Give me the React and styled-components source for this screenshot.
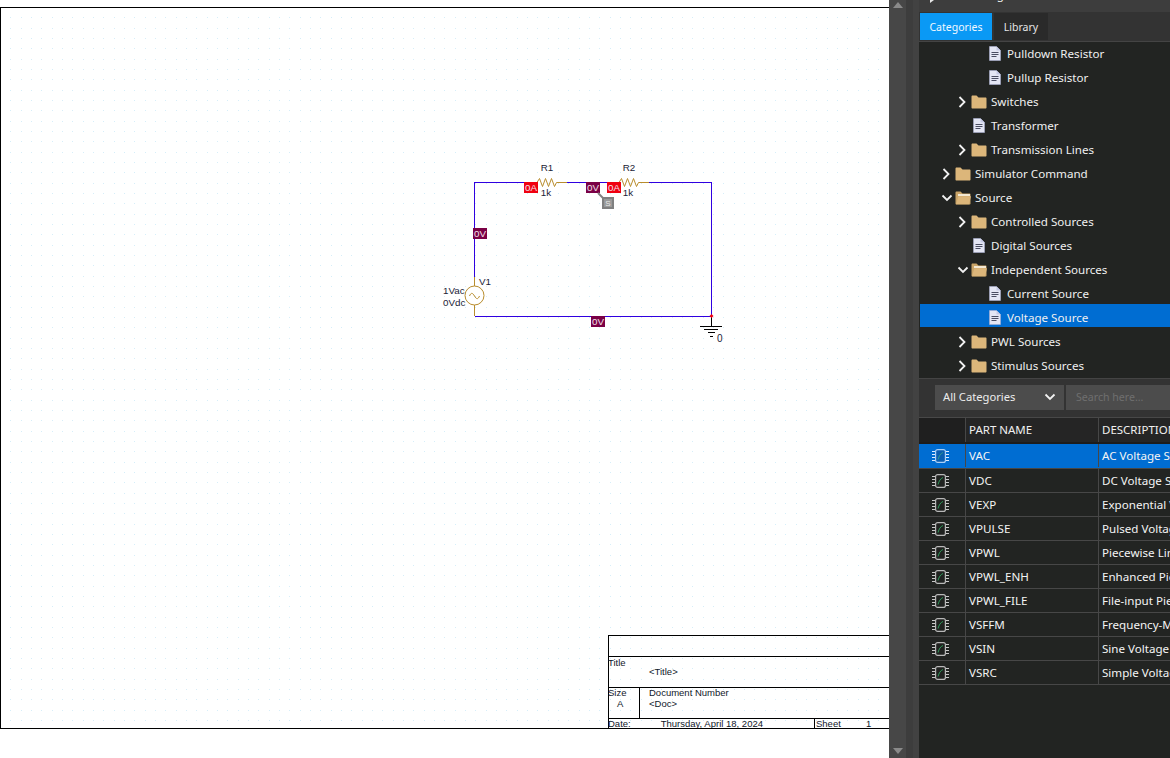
import React from "react";
import styled, { createGlobalStyle } from "styled-components";

const Global = createGlobalStyle`
  html, body { margin: 0; padding: 0; background: #fff; overflow: hidden; }
  * { box-sizing: border-box; }
`;

const UI_FONT = `"Noto Sans", "Open Sans", sans-serif`;
const SCH_FONT = `"Liberation Sans", Arial, sans-serif`;

const Root = styled.div`
  display: flex;
  width: 1170px;
  height: 758px;
  overflow: hidden;
`;

/* ---------- schematic canvas ---------- */
const Canvas = styled.main`
  width: 889px;
  flex: none;
  padding-top: 7px;
  background: #fff;
`;
const Sheet = styled.section`
  position: relative;
  height: 722px;
  border: 1px solid #000;
  border-right: none;
`;
const Drawing = styled.svg`
  position: absolute;
  top: 0;
  left: 0;
  display: block;
  font-family: ${SCH_FONT};
`;
const TitleBlock = styled.div`
  position: absolute;
  left: 607px;
  right: 0;
  bottom: 0;
  height: 93px;
  border-top: 1px solid #000;
  box-shadow: inset 1px 0 0 #000;
  display: grid;
  grid-template-rows: 21px 31px 31px 1fr;
  font: 9.5px/10px ${SCH_FONT};
  color: #10182a;
`;
const TitleRow = styled.div`
  display: flex;
  border-bottom: ${(p) => (p.$last ? "none" : "1px solid #000")};
  overflow: hidden;
`;
const TitleCell = styled.div`
  width: ${(p) => p.$w || "auto"};
  flex: ${(p) => (p.$w ? "none" : "1")};
  border-right: ${(p) => (p.$rule ? "1px solid #000" : "none")};
  padding-left: ${(p) => p.$pad || 0}px;
  padding-top: ${(p) => p.$top || 0}px;
  white-space: nowrap;
`;
const TitleLine = styled.div`
  padding-left: ${(p) => p.$pad || 0}px;
  height: ${(p) => p.$h || 10}px;
`;
const DateValue = styled.span`
  margin-left: 30px;
`;

/* ---------- scrollbar / gutter ---------- */
const ScrollTrack = styled.div`
  width: 17px;
  flex: none;
  background: #474747;
  display: flex;
  flex-direction: column;
  justify-content: space-between;
  align-items: center;
  padding: 2px 0 4px;
`;
const ScrollArrow = styled.span`
  width: 0;
  height: 0;
  border-left: 5px solid transparent;
  border-right: 5px solid transparent;
  border-${(p) => (p.$up ? "bottom" : "top")}: 6px solid #8a8a8a;
`;
const Gutter = styled.div`
  width: 13px;
  flex: none;
  background: linear-gradient(90deg, #3d3d3d 0 7px, #424242 7px);
`;

/* ---------- right panel ---------- */
const Panel = styled.aside`
  flex: 1;
  min-width: 0;
  display: flex;
  flex-direction: column;
  background: #222422;
  font-family: ${UI_FONT};
  color: #ececec;
  overflow: hidden;
`;
const HideBar = styled.div`
  height: 12px;
  flex: none;
  background: #3d3d3d;
  display: flex;
  align-items: flex-end;
  gap: 9px;
  padding-left: 10px;
  overflow: hidden;
  font-size: 11.6px;
  line-height: 16px;
  white-space: nowrap;
`;
const HideText = styled.span`
  display: block;
  margin-bottom: 9px;
  height: 16px;
  flex: none;
`;
const HideArrow = styled.span`
  display: block;
  margin-bottom: 9px;
  flex: none;
  line-height: 0;
`;
const TabBar = styled.div`
  height: 30px;
  flex: none;
  display: flex;
  gap: 2px;
  padding: 1px 0 1px 1px;
  background: #333;
  border-bottom: 1px solid #444;
`;
const Tab = styled.div`
  width: ${(p) => p.$w}px;
  display: flex;
  align-items: center;
  justify-content: center;
  font-size: 10.5px;
  color: ${(p) => (p.$active ? "#f0f8ff" : "#e6e6e6")};
  background: ${(p) => (p.$active ? "#0a99f5" : "#2a2a2a")};
`;
const Tree = styled.div`
  height: 336px;
  flex: none;
  padding-left: 1px;
  overflow: hidden;
`;
const TreeRow = styled.div`
  height: ${(p) => (p.$selected ? 23 : 24)}px;
  margin: ${(p) => (p.$selected ? "-2px 0 3px" : "0")};
  display: flex;
  align-items: center;
  padding-left: ${(p) => 21 + p.$depth * 16}px;
  padding-top: ${(p) => (p.$selected ? 4 : 0)}px;
  padding-bottom: ${(p) => (p.$selected ? 0 : 1)}px;
  background: ${(p) => (p.$selected ? "#006dd2" : "transparent")};
  font-size: 11.6px;
  color: #f0f0f0;
  white-space: nowrap;
`;
const Chevron = styled.span`
  width: 14px;
  height: 14px;
  flex: none;
  display: flex;
  align-items: center;
  justify-content: flex-start;
`;
const NodeIcon = styled.span`
  width: 16px;
  height: 16px;
  flex: none;
  display: flex;
  align-items: center;
  justify-content: center;
  margin-right: 4px;
`;
const FilterBar = styled.div`
  height: 39px;
  flex: none;
  display: flex;
  gap: 2px;
  padding: 6px 0 7px 16px;
  background: #333;
  border-top: 1px solid #444;
`;
const Select = styled.div`
  width: 129px;
  flex: none;
  display: flex;
  align-items: center;
  justify-content: space-between;
  padding: 0 8px 2px;
  background: #4c4c4c;
  font-size: 11.2px;
  color: #ececec;
`;
const Search = styled.div`
  flex: 1;
  display: flex;
  align-items: center;
  padding: 0 0 2px 10px;
  background: #4c4c4c;
  font-size: 10.6px;
  color: #6f6f6f;
  white-space: nowrap;
  overflow: hidden;
`;
const Table = styled.div`
  flex: 1;
  display: flex;
  flex-direction: column;
  min-height: 0;
`;
const HeadRow = styled.div`
  height: 27px;
  flex: none;
  display: grid;
  grid-template-columns: 47px 133px 1fr;
  background: #252525;
  border-top: 1px solid #484848;
  border-bottom: 2px solid #1c1c1c;
  font-size: 11.5px;
  color: #f0f0f0;
`;
const PartRow = styled.div`
  height: ${(p) => (p.$selected ? 25 : 24)}px;
  flex: none;
  display: grid;
  grid-template-columns: 47px 133px 1fr;
  padding-bottom: ${(p) => (p.$selected ? 1 : 0)}px;
  background: ${(p) => (p.$selected ? "#006dd2" : "transparent")};
  border-bottom: 1px solid #474747;
  font-size: 11.6px;
  color: #f4f4f4;
`;
const Cell = styled.div`
  display: flex;
  align-items: center;
  padding-left: 3px;
  padding-bottom: ${(p) => (p.$head ? 2 : 0)}px;
  border-right: ${(p) => (p.$rule ? "1px solid #474747" : "none")};
  background: ${(p) => p.$bg || "transparent"};
  white-space: nowrap;
  overflow: hidden;
`;
const IconCell = styled(Cell)`
  padding-left: 13px;
`;

/* ---------- icons ---------- */
const ChevronRight = () => (
  <svg width="10" height="12" viewBox="0 0 10 12">
    <path d="M2.5 1 7.5 6 2.5 11" fill="none" stroke="#f2f2f2" strokeWidth="1.8" />
  </svg>
);
const ChevronDown = ({ color = "#f2f2f2" }) => (
  <svg width="12" height="10" viewBox="0 0 12 10">
    <path d="M1.5 2.5 6 7l4.5-4.5" fill="none" stroke={color} strokeWidth="1.8" />
  </svg>
);
const Folder = () => (
  <svg width="16" height="14" viewBox="0 0 16 14">
    <path d="M.5 1.5C.5 1 1 .5 1.5.5h4l2 2h7c.6 0 1 .4 1 1v9c0 .6-.4 1-1 1h-13c-.6 0-1-.4-1-1z" fill="#dcb67a" />
  </svg>
);
const FolderOpen = () => (
  <svg width="16" height="14" viewBox="0 0 16 14">
    <path d="M.5 1.5C.5 1 1 .5 1.5.5h4l2 2h7c.6 0 1 .4 1 1v9c0 .6-.4 1-1 1h-13c-.6 0-1-.4-1-1z" fill="#c9a468" />
    <path d="M3 3h12v2H3z" fill="#f3e8d2" />
    <path d="M3.4 5.2H16l-2 8H1z" fill="#dcb67a" />
  </svg>
);
const Doc = () => (
  <svg width="12" height="15" viewBox="0 0 12 15">
    <path d="M.5.5h7l4 4v10H.5z" fill="#e4e6f4" stroke="#a9aed0" strokeWidth=".6" />
    <path d="M7.5.5v4h4" fill="#c5c9e4" />
    <path d="M2.5 6.5h7M2.5 8.5h7M2.5 10.5h5" stroke="#4a4d62" strokeWidth="1" />
  </svg>
);
const Chip = ({ selected }) => (
  <svg width="17" height="14" viewBox="0 0 17 14">
    <path d="M0 2.5h4M0 5.5h4M0 8.5h4M0 11.5h4M13 2.5h4M13 5.5h4M13 8.5h4M13 11.5h4" stroke={selected ? "#dceaff" : "#c8c8c8"} strokeWidth="1" />
    <rect x="3.6" y=".6" width="9.8" height="12.8" rx="2" fill={selected ? "#0a5db0" : "#202220"} stroke={selected ? "#a9cff7" : "#b8b8b8"} strokeWidth="1.2" />
    <path d="M6 10.5C7 7 8.5 4.5 11 3.5" fill="none" stroke={selected ? "#2f9a8a" : "#2f9a5a"} strokeWidth="1" />
  </svg>
);
const SmallArrow = () => (
  <svg width="6" height="6" viewBox="0 0 6 6">
    <path d="M1 0v6l4-3z" fill="#e8e8e8" />
  </svg>
);

/* ---------- schematic drawing ---------- */
const WIRE = "#3000e0";
const PART = "#b98d2e";
const TEXT = "#1a2236";

const Probe = ({ x, y, fill, children }) => (
  <g>
    <rect x={x} y={y} width="14" height="11" fill={fill} />
    <text x={x + 7} y={y + 9} textAnchor="middle" fontSize="9.8" fill="#f2e2ea">{children}</text>
  </g>
);
const Resistor = ({ x }) => (
  <path
    d={`M${x} 182.5l2.5-4 3 8 3-8 3 8 3-8 3 8 2-4h10.5`}
    fill="none"
    stroke={PART}
    strokeWidth="1"
  />
);
const Label = ({ x, y, anchor = "start", size = 9.8, children }) => (
  <text x={x} y={y} textAnchor={anchor} fontSize={size} fill={TEXT}>{children}</text>
);

const Schematic = () => (
  <Drawing width="888" height="720" viewBox="1 8 888 720">
    <defs>
      <pattern id="dots" x="10" y="17" width="31" height="31" patternUnits="userSpaceOnUse">
        {[0, 11, 21].flatMap((dx) =>
          [0, 11, 21].map((dy) => (
            <rect key={`${dx}-${dy}`} x={dx} y={dy} width="1" height="1" fill="#d6eef9" />
          ))
        )}
      </pattern>
    </defs>
    <rect x="1" y="8" width="888" height="720" fill="url(#dots)" shapeRendering="crispEdges" />

    <g fill="none" stroke={WIRE} strokeWidth="1" shapeRendering="crispEdges">
      <path d="M474.5 277V182.5H538M567 182.5H619M648 182.5H711.5V316.5H474.5" />
    </g>
    <Resistor x={537} />
    <Resistor x={619} />
    <g fill="none" stroke={PART} strokeWidth="1">
      <path d="M474.5 277v9M474.5 305v11" />
      <circle cx="474.5" cy="295.5" r="9.5" />
      <path d="M469.5 296c1.5-3.5 3-3.5 5 0s3.5 3.5 5 0" />
    </g>

    <Probe x={524} y={182} fill="#f00010">0A</Probe>
    <Probe x={607} y={182} fill="#f00010">0A</Probe>
    <Probe x={586} y={182} fill="#7a0045">0V</Probe>
    <Probe x={473} y={228} fill="#7a0045">0V</Probe>
    <Probe x={591} y={316} fill="#7a0045">0V</Probe>

    <path d="M598 193l6 6" stroke="#808080" strokeWidth="2" />
    <rect x="602" y="197" width="12" height="12" fill="#808080" />
    <rect x="604" y="199" width="8" height="8" fill="#9a9a9a" />
    <text x="608" y="206" textAnchor="middle" fontSize="8" fill="#e8e8e8">S</text>

    <Label x={547} y={171} anchor="middle">R1</Label>
    <Label x={629} y={171} anchor="middle">R2</Label>
    <Label x={546} y={196} anchor="middle">1k</Label>
    <Label x={628} y={196} anchor="middle">1k</Label>
    <Label x={479} y={285}>V1</Label>
    <Label x={443} y={294}>1Vac</Label>
    <Label x={443} y={306}>0Vdc</Label>
    <Label x={717} y={342} size={10}>0</Label>

    <g stroke="#000" strokeWidth="1" shapeRendering="crispEdges">
      <path d="M711.5 316v10M700 326.5h22M704 329.5h14M708 332.5h7M710 336.5h3" />
    </g>
    <path d="M711.5 314l2 2-2 2-2-2z" fill="#f00010" />
  </Drawing>
);

/* ---------- data ---------- */
const tree = [
  { depth: 2, icon: "doc", label: "Pulldown Resistor" },
  { depth: 2, icon: "doc", label: "Pullup Resistor" },
  { depth: 1, icon: "closed", label: "Switches" },
  { depth: 1, icon: "doc", label: "Transformer" },
  { depth: 1, icon: "closed", label: "Transmission Lines" },
  { depth: 0, icon: "closed", label: "Simulator Command" },
  { depth: 0, icon: "open", label: "Source" },
  { depth: 1, icon: "closed", label: "Controlled Sources" },
  { depth: 1, icon: "doc", label: "Digital Sources" },
  { depth: 1, icon: "open", label: "Independent Sources" },
  { depth: 2, icon: "doc", label: "Current Source" },
  { depth: 2, icon: "doc", label: "Voltage Source", selected: true },
  { depth: 1, icon: "closed", label: "PWL Sources" },
  { depth: 1, icon: "closed", label: "Stimulus Sources" },
];

const parts = [
  ["VAC", "AC Voltage Source"],
  ["VDC", "DC Voltage Source"],
  ["VEXP", "Exponential Voltage Source"],
  ["VPULSE", "Pulsed Voltage Source"],
  ["VPWL", "Piecewise Linear Source"],
  ["VPWL_ENH", "Enhanced Piecewise Source"],
  ["VPWL_FILE", "File-input Piecewise Source"],
  ["VSFFM", "Frequency-Modulated Source"],
  ["VSIN", "Sine Voltage Source"],
  ["VSRC", "Simple Voltage Source"],
];

const TreeItem = ({ depth, icon, label, selected }) => (
  <TreeRow $depth={depth} $selected={selected}>
    <Chevron>
      {icon === "closed" && <ChevronRight />}
      {icon === "open" && <ChevronDown />}
    </Chevron>
    <NodeIcon>
      {icon === "doc" && <Doc />}
      {icon === "closed" && <Folder />}
      {icon === "open" && <FolderOpen />}
    </NodeIcon>
    {label}
  </TreeRow>
);

export default function App() {
  return (
    <Root>
      <Global />
      <Canvas>
        <Sheet>
          <Schematic />
          <TitleBlock>
            <TitleRow />
            <TitleRow>
              <TitleCell $w="41px" $top="1">Title</TitleCell>
              <TitleCell $top="10">&lt;Title&gt;</TitleCell>
            </TitleRow>
            <TitleRow>
              <TitleCell $w="32px" $rule>
                <TitleLine $h={11}>Size</TitleLine>
                <TitleLine $pad={9}>A</TitleLine>
              </TitleCell>
              <TitleCell $pad={9}>
                <TitleLine $h={11}>Document Number</TitleLine>
                <TitleLine>&lt;Doc&gt;</TitleLine>
              </TitleCell>
            </TitleRow>
            <TitleRow $last>
              <TitleCell $w="207px" $rule>
                Date:
                <DateValue>Thursday, April 18, 2024</DateValue>
              </TitleCell>
              <TitleCell $w="51px" $pad={1}>Sheet</TitleCell>
              <TitleCell>1</TitleCell>
            </TitleRow>
          </TitleBlock>
        </Sheet>
      </Canvas>

      <ScrollTrack>
        <ScrollArrow $up />
        <ScrollArrow />
      </ScrollTrack>
      <Gutter />

      <Panel>
        <HideBar>
          <HideArrow><SmallArrow /></HideArrow>
          <HideText>Hide Categories View</HideText>
        </HideBar>
        <TabBar>
          <Tab $w={72} $active>Categories</Tab>
          <Tab $w={54}>Library</Tab>
        </TabBar>
        <Tree>
          {tree.map((n) => (
            <TreeItem key={n.label} {...n} />
          ))}
        </Tree>
        <FilterBar>
          <Select>
            All Categories
            <ChevronDown />
          </Select>
          <Search>Search here...</Search>
        </FilterBar>
        <Table>
          <HeadRow>
            <Cell $rule $bg="#1f1f1f" />
            <Cell $rule $head>PART NAME</Cell>
            <Cell $head>DESCRIPTION</Cell>
          </HeadRow>
          {parts.map(([name, desc], i) => (
            <PartRow key={name} $selected={i === 0}>
              <IconCell $rule><Chip selected={i === 0} /></IconCell>
              <Cell $rule>{name}</Cell>
              <Cell>{desc}</Cell>
            </PartRow>
          ))}
        </Table>
      </Panel>
    </Root>
  );
}
